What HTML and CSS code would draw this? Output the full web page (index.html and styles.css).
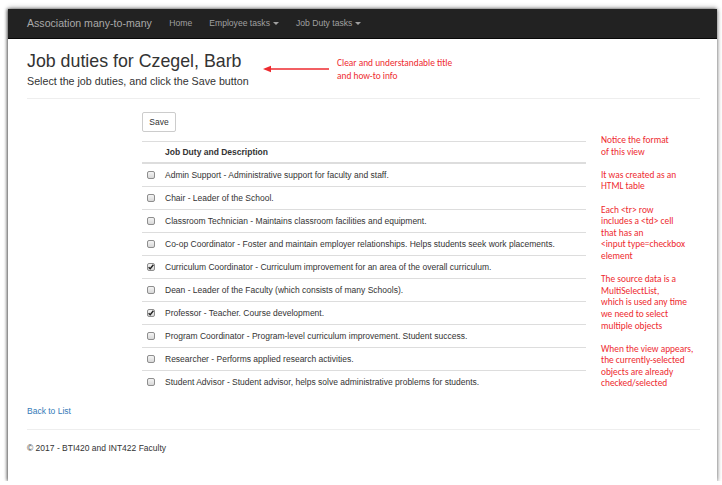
FILE: index.html
```html
<!DOCTYPE html>
<html lang="en">
<head>
<meta charset="utf-8">
<title>Job duties for Czegel, Barb</title>
<link rel="stylesheet" href="styles.css">
</head>
<body>
<div class="frame">
  <nav class="navbar">
    <span class="brand">Association many-to-many</span>
    <span class="nav-link">Home</span>
    <span class="nav-link">Employee tasks <span class="caret"></span></span>
    <span class="nav-link">Job Duty tasks <span class="caret"></span></span>
  </nav>
  <main class="container">
    <h2 class="title">Job duties for Czegel, Barb</h2>
    <h4 class="subtitle">Select the job duties, and click the Save button</h4>
    <hr class="rule">
    <div class="form-area">
      <button class="btn">Save</button>
      <table class="duties">
        <thead>
          <tr><th class="cb-col"></th><th>Job Duty and Description</th></tr>
        </thead>
        <tbody>
          <tr><td class="cb-col"><span class="cb"></span></td><td>Admin Support - Administrative support for faculty and staff.</td></tr>
          <tr><td class="cb-col"><span class="cb"></span></td><td>Chair - Leader of the School.</td></tr>
          <tr><td class="cb-col"><span class="cb"></span></td><td>Classroom Technician - Maintains classroom facilities and equipment.</td></tr>
          <tr><td class="cb-col"><span class="cb"></span></td><td>Co-op Coordinator - Foster and maintain employer relationships. Helps students seek work placements.</td></tr>
          <tr><td class="cb-col"><span class="cb checked"><svg viewBox="0 0 8 8" width="8" height="8"><path d="M1.6 4.2 L3.2 5.8 L6.4 1.8" fill="none" stroke="#222" stroke-width="1.4"/></svg></span></td><td>Curriculum Coordinator - Curriculum improvement for an area of the overall curriculum.</td></tr>
          <tr><td class="cb-col"><span class="cb"></span></td><td>Dean - Leader of the Faculty (which consists of many Schools).</td></tr>
          <tr><td class="cb-col"><span class="cb checked"><svg viewBox="0 0 8 8" width="8" height="8"><path d="M1.6 4.2 L3.2 5.8 L6.4 1.8" fill="none" stroke="#222" stroke-width="1.4"/></svg></span></td><td>Professor - Teacher. Course development.</td></tr>
          <tr><td class="cb-col"><span class="cb"></span></td><td>Program Coordinator - Program-level curriculum improvement. Student success.</td></tr>
          <tr><td class="cb-col"><span class="cb"></span></td><td>Researcher - Performs applied research activities.</td></tr>
          <tr><td class="cb-col"><span class="cb"></span></td><td>Student Advisor - Student advisor, helps solve administrative problems for students.</td></tr>
        </tbody>
      </table>
    </div>
    <a class="back" href="#">Back to List</a>
    <hr class="rule footer-rule">
    <footer class="footer">© 2017 - BTI420 and INT422 Faculty</footer>

    <svg class="arrow" width="68" height="8" viewBox="0 0 68 8"><path d="M7 4 H66" stroke="#ee2a2f" stroke-width="1.5"/><path d="M0 4 L8 0.8 L8 7.2 Z" fill="#ee2a2f"/></svg>
    <div class="note note-top">Clear and understandable title<br>and how-to info</div>
    <div class="note note-side">Notice the format<br>of this view<br><br>It was created as an<br>HTML table<br><br>Each &lt;tr&gt; row<br>includes a &lt;td&gt; cell<br>that has an<br>&lt;input type=checkbox<br>element<br><br>The source data is a<br>MultiSelectList,<br>which is used any time<br>we need to select<br>multiple objects<br><br>When the view appears,<br>the currently-selected<br>objects are already<br>checked/selected</div>
  </main>
</div>
</body>
</html>
```

FILE: styles.css
```css
html, body {
  margin: 0;
  padding: 0;
  background: #fff;
}
body {
  font-family: "Liberation Sans", Arial, Helvetica, sans-serif;
  color: #333;
  font-size: 8.5px;
  line-height: 1.5;
}
.frame {
  margin: 9px 5px 0 8px;
  width: 709px;
  height: 472px;
  background: #fff;
  box-shadow: -1px 0 3px rgba(0,0,0,0.55), 1px 1px 4px rgba(0,0,0,0.25), 0 -2px 5px rgba(0,0,0,0.18);
  overflow: hidden;
}
.navbar {
  height: 30px;
  background: #222;
  display: flex;
  align-items: center;
  padding-left: 19px;
  border-bottom: 1px solid #080808;
  box-sizing: border-box;
}
.brand {
  color: #a9a9a9;
  font-size: 10.6px;
  padding-right: 9px;
}
.nav-link {
  color: #a0a0a0;
  font-size: 8.6px;
  padding: 0 8.5px;
  display: flex;
  align-items: center;
}
.caret {
  display: inline-block;
  width: 0;
  height: 0;
  margin-left: 3px;
  border-top: 3px solid #a0a0a0;
  border-left: 3px solid transparent;
  border-right: 3px solid transparent;
}
.container {
  position: relative;
  display: flow-root;
  padding: 0 17px 0 19px;
}
.title {
  margin: 10px 0 0;
  font-size: 17.8px;
  font-weight: normal;
  line-height: 24px;
  color: #333;
}
.subtitle {
  margin: 0;
  font-size: 10.7px;
  font-weight: normal;
  line-height: 16px;
  color: #333;
}
.rule {
  margin: 9px 0 0;
  border: 0;
  border-top: 1px solid #eee;
  height: 0;
}
.form-area {
  margin-left: 115px;
  width: 444px;
}
.btn {
  margin-top: 13px;
  width: 34px;
  height: 20px;
  padding: 0;
  background: #fff;
  border: 1px solid #ccc;
  border-radius: 2px;
  font-family: inherit;
  font-size: 8.5px;
  color: #333;
}
.duties {
  margin-top: 9px;
  width: 100%;
  border-collapse: collapse;
}
.duties th, .duties td {
  text-align: left;
  padding: 0;
  height: 22px;
  vertical-align: middle;
  border-top: 1px solid #ddd;
  white-space: nowrap;
}
.duties th {
  height: 20px;
  font-weight: bold;
  border-bottom: 2px solid #ddd;
}
.cb-col {
  width: 23px;
}
.cb {
  display: block;
  box-sizing: border-box;
  width: 8px;
  height: 8px;
  margin-left: 5px;
  border: 1px solid #8e8e8e;
  border-radius: 2px;
  background: linear-gradient(#f4f4f4, #d8d8d8);
  position: relative;
}
.cb svg {
  position: absolute;
  left: -1px;
  top: -1px;
}
.back {
  display: block;
  margin-top: 12px;
  color: #337ab7;
  text-decoration: none;
  line-height: 13px;
}
.footer-rule {
  margin-top: 11px;
}
.footer {
  margin-top: 12px;
  line-height: 13px;
}
.note {
  position: absolute;
  color: #ee2a2f;
  font-family: Carlito, Calibri, Lato, "Open Sans", sans-serif;
  font-size: 9.4px;
  line-height: 11.6px;
}
.note-top {
  left: 329px;
  top: 18px;
  line-height: 12.5px;
}
.note-side {
  left: 593px;
  top: 96px;
}
.arrow {
  position: absolute;
  left: 255px;
  top: 26px;
}
```
